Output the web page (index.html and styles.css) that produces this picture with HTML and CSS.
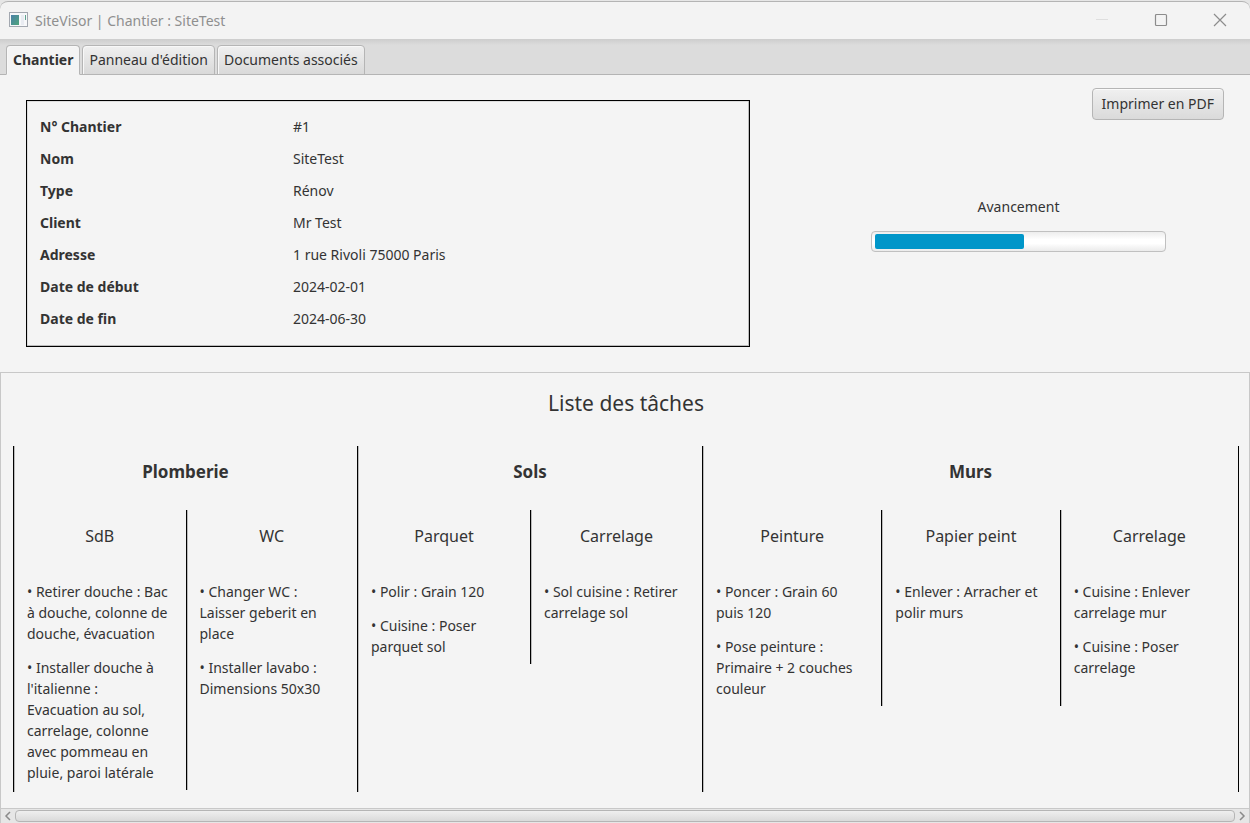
FILE: index.html
```html
<!DOCTYPE html>
<html lang="fr">
<head>
<meta charset="utf-8">
<meta name="viewport" content="width=device-width, initial-scale=1">
<title>SiteVisor | Chantier : SiteTest</title>
<link rel="stylesheet" href="styles.css">
</head>
<body>
<div class="window">
  <header class="titlebar">
    <svg class="app-icon" width="20" height="16" viewBox="0 0 20 16" aria-hidden="true">
      <defs><linearGradient id="screen" x1="0" y1="0" x2="1" y2="1"><stop offset="0" stop-color="#4a80a8"/><stop offset="1" stop-color="#4fa57c"/></linearGradient></defs>
      <rect x="0.5" y="0.5" width="18" height="14" fill="#f7f8fa" stroke="#a3a8b0"/>
      <rect x="2" y="3" width="8" height="10" fill="url(#screen)"/>
      <rect x="12" y="3" width="3" height="10" fill="#e9ecf2"/>
      <rect x="16" y="3" width="1" height="5" fill="#5fa38f"/>
    </svg>
    <span class="window-title">SiteVisor | Chantier : SiteTest</span>
    <div class="window-buttons">
      <button class="window-button" type="button" aria-label="Réduire"><svg width="14" height="14" viewBox="0 0 14 14"><path d="M1 6.5h12" stroke="#dedede"/></svg></button>
      <button class="window-button" type="button" aria-label="Agrandir"><svg width="14" height="14" viewBox="0 0 14 14"><rect x="1.5" y="1.5" width="11" height="11" rx="1" fill="none" stroke="#8c8c8c" stroke-width="1.2"/></svg></button>
      <button class="window-button" type="button" aria-label="Fermer"><svg width="14" height="14" viewBox="0 0 14 14"><path d="M1 1l12 12M13 1L1 13" stroke="#8c8c8c" stroke-width="1.2"/></svg></button>
    </div>
  </header>

  <nav class="tabs" role="tablist">
    <button class="tab tab-selected" type="button" role="tab" aria-selected="true">Chantier</button>
    <button class="tab" type="button" role="tab" aria-selected="false">Panneau d'édition</button>
    <button class="tab" type="button" role="tab" aria-selected="false">Documents associés</button>
  </nav>

  <main class="content">
    <section class="summary">
      <dl class="details">
        <dt>N° Chantier</dt><dd>#1</dd>
        <dt>Nom</dt><dd>SiteTest</dd>
        <dt>Type</dt><dd>Rénov</dd>
        <dt>Client</dt><dd>Mr Test</dd>
        <dt>Adresse</dt><dd>1 rue Rivoli 75000 Paris</dd>
        <dt>Date de début</dt><dd>2024-02-01</dd>
        <dt>Date de fin</dt><dd>2024-06-30</dd>
      </dl>
      <div class="side">
        <button class="print" type="button">Imprimer en PDF</button>
        <div class="progress">
          <span id="progress-label">Avancement</span>
          <div class="track" role="progressbar" aria-labelledby="progress-label" aria-valuemin="0" aria-valuemax="100" aria-valuenow="52"><div class="bar" style="width:52%"></div></div>
        </div>
      </div>
    </section>

    <section class="tasks">
      <h1>Liste des tâches</h1>
      <div class="categories">
        <section class="category">
          <h2>Plomberie</h2>
          <div class="rooms">
            <div class="room">
              <h3>SdB</h3>
              <p>• Retirer douche : Bac à douche, colonne de douche, évacuation</p>
              <p>• Installer douche à l'italienne :<br>Evacuation au sol, carrelage, colonne avec pommeau en pluie, paroi latérale</p>
            </div>
            <div class="room">
              <h3>WC</h3>
              <p>• Changer WC :<br>Laisser geberit en place</p>
              <p>• Installer lavabo : Dimensions 50x30</p>
            </div>
          </div>
        </section>
        <section class="category">
          <h2>Sols</h2>
          <div class="rooms">
            <div class="room">
              <h3>Parquet</h3>
              <p>• Polir : Grain 120</p>
              <p>• Cuisine : Poser parquet sol</p>
            </div>
            <div class="room">
              <h3>Carrelage</h3>
              <p>• Sol cuisine : Retirer carrelage sol</p>
            </div>
          </div>
        </section>
        <section class="category">
          <h2>Murs</h2>
          <div class="rooms">
            <div class="room">
              <h3>Peinture</h3>
              <p>• Poncer : Grain 60 puis 120</p>
              <p>• Pose peinture : Primaire + 2 couches couleur</p>
            </div>
            <div class="room">
              <h3>Papier peint</h3>
              <p>• Enlever : Arracher et polir murs</p>
            </div>
            <div class="room">
              <h3>Carrelage</h3>
              <p>• Cuisine : Enlever carrelage mur</p>
              <p>• Cuisine : Poser carrelage</p>
            </div>
          </div>
        </section>
      </div>
    </section>
  </main>

  <div class="scrollbar">
    <button class="arrow" type="button" aria-label="Défiler à gauche"><svg width="8" height="10" viewBox="0 0 8 10"><path d="M6 1L2 5l4 4" fill="none" stroke="#8a8a8a" stroke-width="1.5"/></svg></button>
    <div class="thumb"></div>
    <button class="arrow" type="button" aria-label="Défiler à droite"><svg width="8" height="10" viewBox="0 0 8 10"><path d="M2 1l4 4-4 4" fill="none" stroke="#8a8a8a" stroke-width="1.5"/></svg></button>
  </div>
</div>
</body>
</html>
```

FILE: styles.css
```css
* { box-sizing: border-box; }

body {
  margin: 0;
  background: #e6e6e6;
  color: #333;
  font: 14px/21px "Noto Sans", "Open Sans", sans-serif;
}

button { font: inherit; color: inherit; }

.window {
  display: flex;
  flex-direction: column;
  min-height: 100vh;
  padding-top: 1px;
}

.titlebar {
  display: flex;
  align-items: center;
  height: 38px;
  padding: 0 1px 1px 9px;
  gap: 6px;
  background: #f3f3f3;
  border-top: 1px solid #b4b4b4;
  border-radius: 8px 8px 0 0;
  color: #8f8f8f;
}

.window-buttons { display: flex; margin-left: auto; }

.window-button {
  display: grid;
  place-items: center;
  width: 59px;
  height: 36px;
  padding: 0;
  border: 0;
  background: none;
}

.tabs {
  display: flex;
  align-items: flex-end;
  gap: 2px;
  height: 36px;
  padding-left: 6px;
  background: linear-gradient(#cdcdcd, #dcdcdc 6px);
  box-shadow: inset 0 -1px #b4b4b4;
}

.tab {
  height: 30px;
  padding: 0 6px 2px;
  border: 1px solid #b5b5b5;
  border-radius: 4px 4px 0 0;
  background: linear-gradient(#f0f0f0, #d9d9d9);
  box-shadow: inset 1px 1px #f8f8f8;
}

.tab-selected {
  border-bottom-color: #f4f4f4;
  background: #f4f4f4;
  font-weight: bold;
}

.content {
  display: flex;
  flex: 1;
  flex-direction: column;
  background: #f4f4f4;
}

.summary {
  display: grid;
  grid-template-columns: 724fr 474fr;
  padding: 13px 26px 25px;
}

.details {
  display: grid;
  grid-template-columns: 253px 1fr;
  row-gap: 11px;
  margin: 12px 0 0;
  padding: 15px 13px 17px;
  border: 1px solid #000;
  box-shadow: inset -1px -1px #bbb, inset 1px 1px #ddd;
}

.details dt { font-weight: bold; }
.details dd { margin: 0; }

.side { display: flex; flex-direction: column; }

.print {
  align-self: flex-end;
  height: 32px;
  padding: 0 9px 2px;
  border: 1px solid #b5b5b5;
  border-radius: 4px;
  background: linear-gradient(#f0f0f0, #dadada);
  box-shadow: inset 0 1px #fafafa;
}

.progress {
  display: flex;
  flex-direction: column;
  align-items: center;
  gap: 14px;
  margin: 76px 58px 0 121px;
}

.track {
  width: 100%;
  height: 21px;
  padding: 2px 3px;
  border: 1px solid #c0c0c0;
  border-radius: 4px;
  background: linear-gradient(#ededed, #fff 40%, #fff 60%, #ebebeb);
}

.bar {
  height: 15px;
  border-radius: 2px;
  background: #0096c9;
}

.tasks {
  flex: 1;
  padding: 14px 10px 14px 12px;
  border: 1px solid #c8c8c8;
  border-bottom: 0;
}

h1, h2, h3 { margin: 0; text-align: center; }
h1 { font-size: 21px; line-height: 32px; font-weight: normal; }
h2 { font-size: 17px; line-height: 24px; padding: 14px 0 26px; }
h3 { font-size: 16px; line-height: 24px; padding: 14px 0 20px; font-weight: normal; }

.categories {
  display: grid;
  grid-template-columns: 344fr 345fr 536fr;
  margin-top: 27px;
  border-right: 1px solid #000;
}

.category {
  min-width: 0;
  padding-bottom: 2px;
  border-left: 1px solid #000;
  box-shadow: inset 1px 0 #bbb;
}

.rooms {
  display: grid;
  grid-auto-flow: column;
  grid-auto-columns: minmax(0, 1fr);
}

.room { padding: 0 13px 7px; }
.room + .room { border-left: 1px solid #000; box-shadow: inset 1px 0 #bbb; }
.room p { margin: 13px 0 0; }

.scrollbar {
  display: flex;
  align-items: center;
  height: 15px;
  border: 1px solid #c8c8c8;
  border-bottom: 0;
  background: #e6e6e6;
}

.arrow {
  display: grid;
  place-items: center;
  width: 14px;
  height: 14px;
  padding: 0;
  border: 0;
  background: none;
}

.thumb {
  flex: 1;
  height: 12px;
  border: 1px solid #b5b5b5;
  border-radius: 4px;
  background: linear-gradient(#efefef, #dadada);
}
```
